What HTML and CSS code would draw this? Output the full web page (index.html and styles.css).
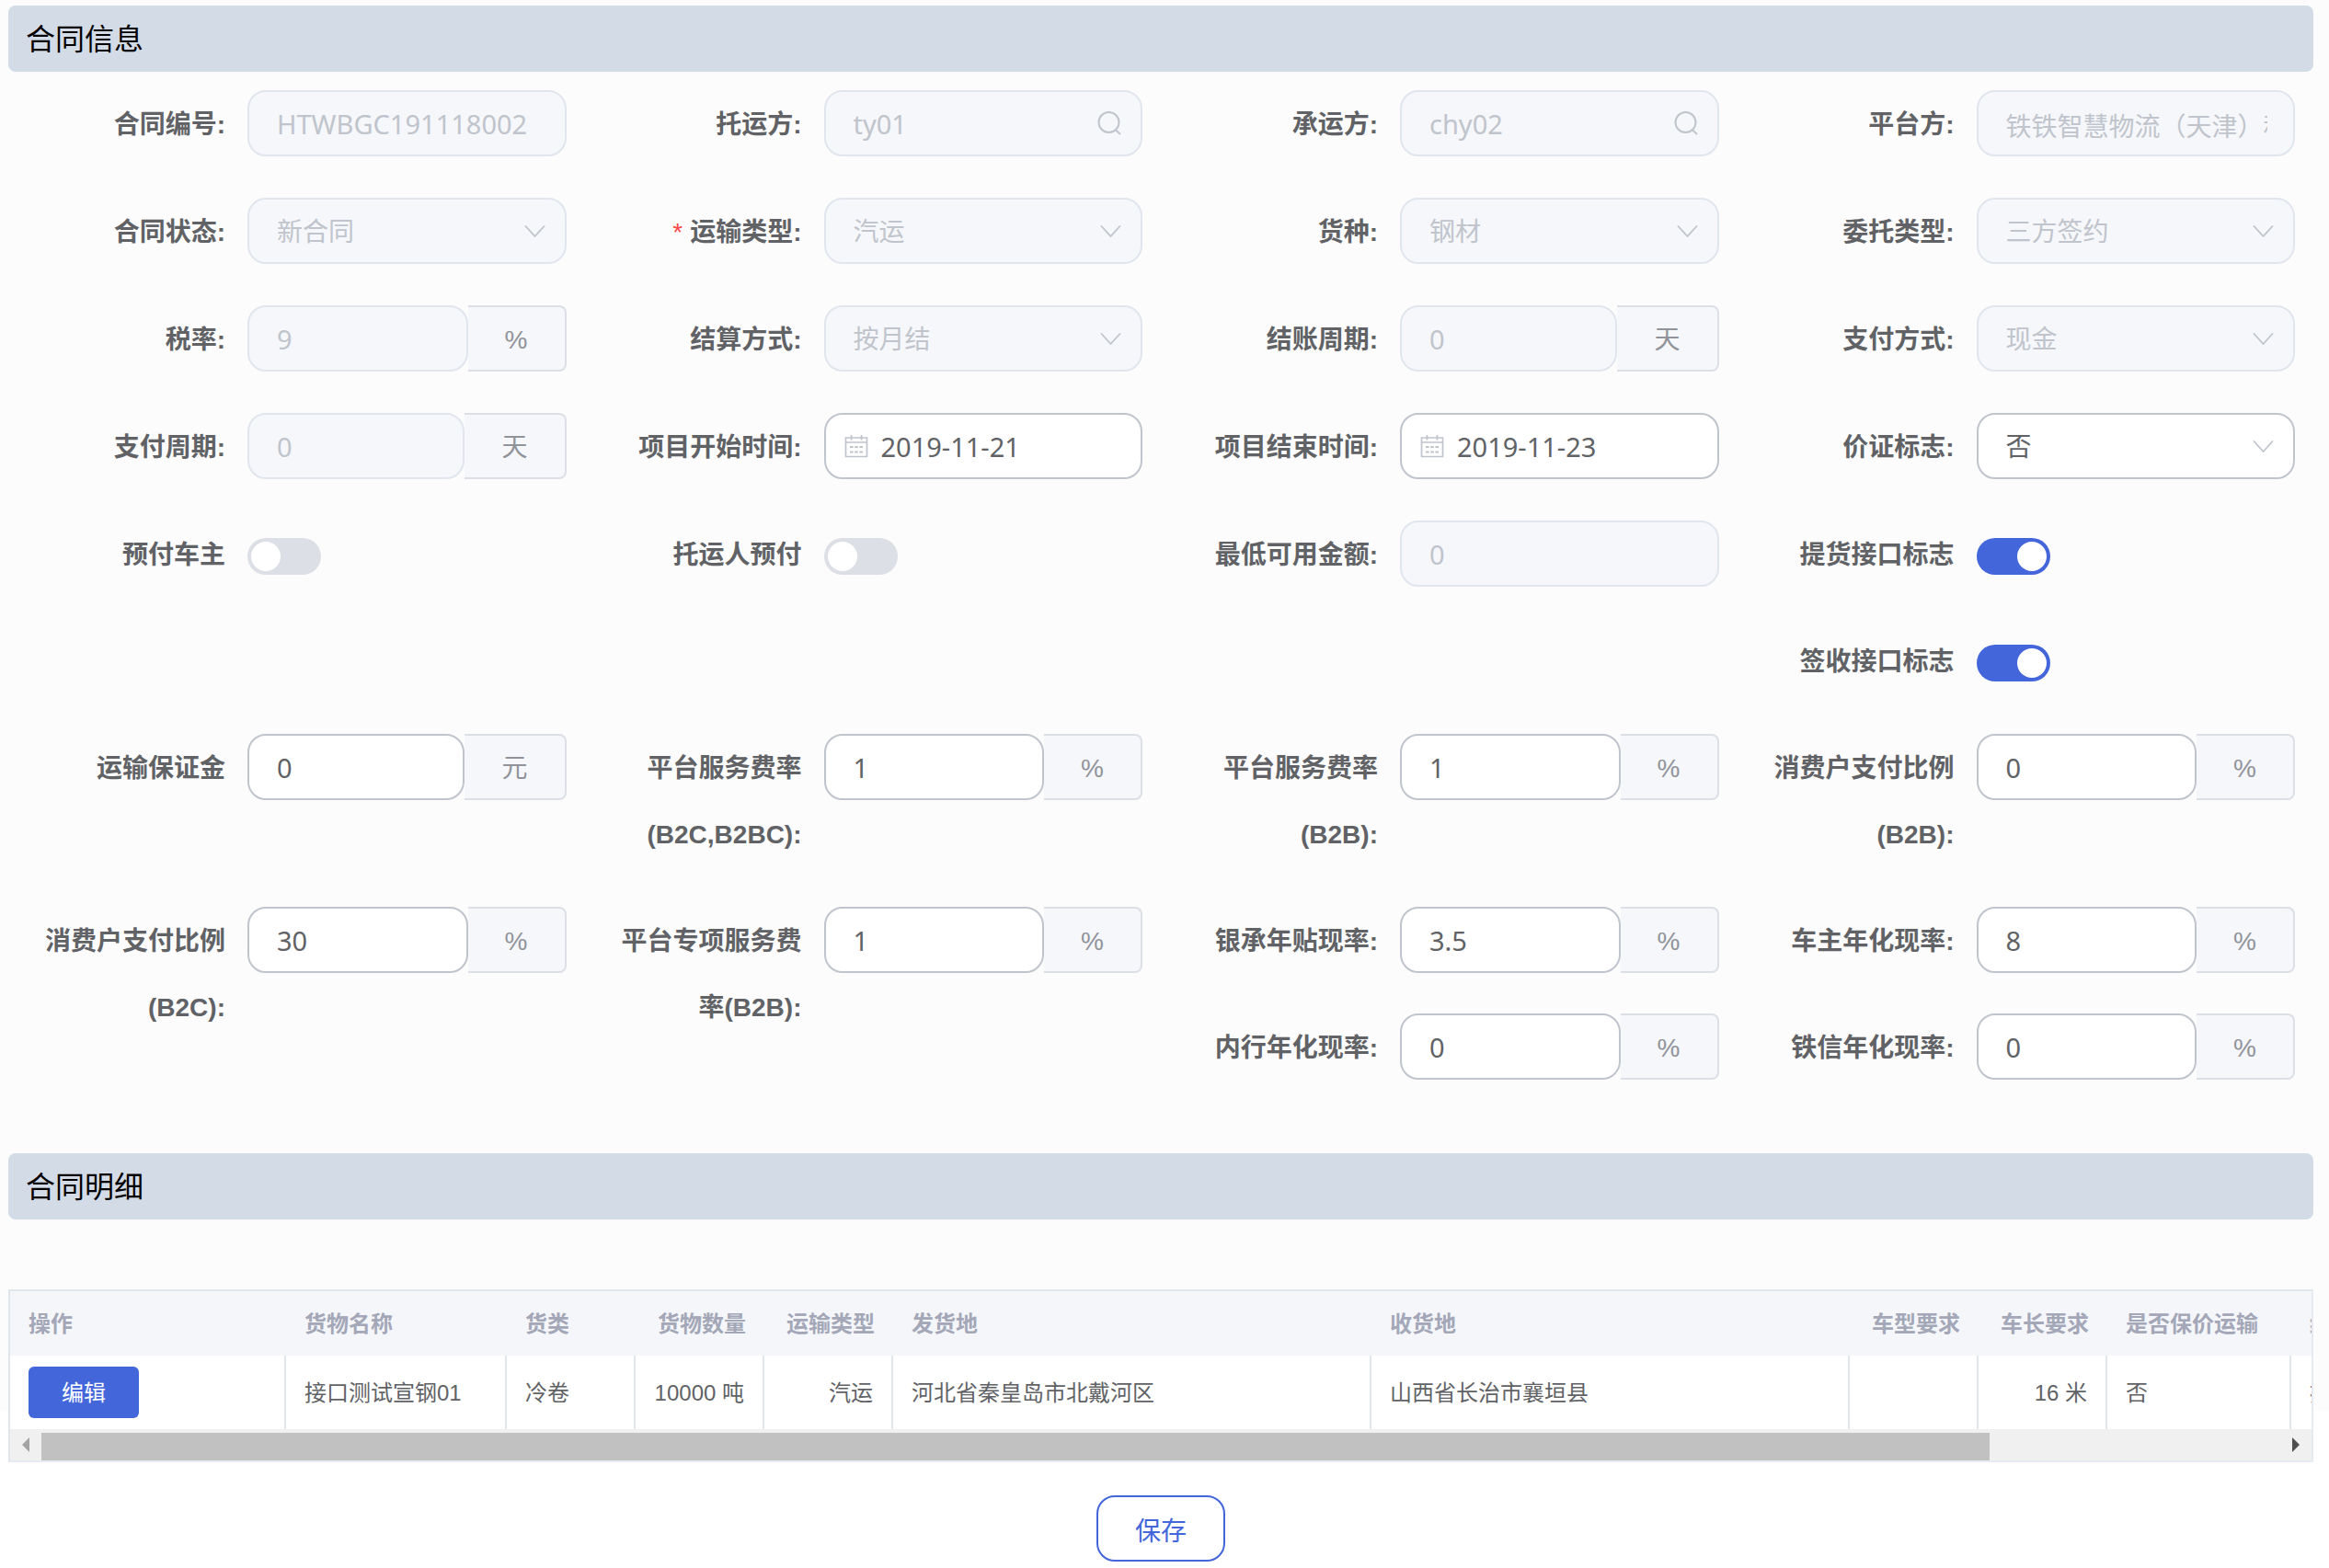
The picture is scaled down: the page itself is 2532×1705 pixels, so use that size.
FILE: index.html
```html
<!DOCTYPE html>
<html lang="zh-CN">
<head>
<meta charset="utf-8">
<meta name="viewport" content="width=device-width, initial-scale=1">
<title>合同信息</title>
<link rel="stylesheet" href="styles.css">
</head>
<body>
<svg class="sprite" aria-hidden="true">
  <symbol id="chevron" viewBox="0 0 24 24"><path d="M2.500 7L12.500 18L22.500 7" fill="none" stroke="currentColor" stroke-width="1.800" stroke-linecap="round" stroke-linejoin="round"/></symbol>
  <symbol id="search" viewBox="0 0 26 26"><circle cx="12.500" cy="12" r="11" fill="none" stroke="currentColor" stroke-width="2"/><path d="M20 20.500L24.500 24.500" fill="none" stroke="currentColor" stroke-width="2" stroke-linecap="round"/></symbol>
  <symbol id="calendar" viewBox="0 0 26 26"><path d="M1.500 4H24.500V24.500H1.500ZM1.500 9H24.500M7.500 1V6.500M18.500 1V6.500" fill="none" stroke="currentColor" stroke-width="1.700"/><path d="M6 14H20M6 19.500H20" fill="none" stroke="currentColor" stroke-width="2" stroke-dasharray="3.600 1.600"/></symbol>
</svg>
<main class="page">
  <form>
    <h2 class="section-title">合同信息</h2>

    <div class="fields fields-basic">
      <div class="field"><label for="no">合同编号:</label><div class="control"><input id="no" class="box latin" value="HTWBGC191118002" disabled></div></div>
      <div class="field"><label for="shipper">托运方:</label><div class="control"><input id="shipper" class="box latin" value="ty01" disabled><svg class="icon icon-search"><use href="#search"/></svg></div></div>
      <div class="field"><label for="carrier">承运方:</label><div class="control"><input id="carrier" class="box latin" value="chy02" disabled><svg class="icon icon-search"><use href="#search"/></svg></div></div>
      <div class="field"><label for="platform">平台方:</label><div class="control"><input id="platform" class="box" value="铁铁智慧物流（天津）科技有限公司" disabled></div></div>

      <div class="field"><label for="status">合同状态:</label><div class="control"><select id="status" class="box" disabled><option>新合同</option></select><svg class="icon"><use href="#chevron"/></svg></div></div>
      <div class="field"><label for="transport"><span class="required">*</span>运输类型:</label><div class="control"><select id="transport" class="box" disabled><option>汽运</option></select><svg class="icon"><use href="#chevron"/></svg></div></div>
      <div class="field"><label for="goods">货种:</label><div class="control"><select id="goods" class="box" disabled><option>钢材</option></select><svg class="icon"><use href="#chevron"/></svg></div></div>
      <div class="field"><label for="entrust">委托类型:</label><div class="control"><select id="entrust" class="box" disabled><option>三方签约</option></select><svg class="icon"><use href="#chevron"/></svg></div></div>

      <div class="field"><label for="tax">税率:</label><div class="control"><input id="tax" class="box latin" value="9" disabled><span class="unit">%</span></div></div>
      <div class="field"><label for="settle">结算方式:</label><div class="control"><select id="settle" class="box" disabled><option>按月结</option></select><svg class="icon"><use href="#chevron"/></svg></div></div>
      <div class="field"><label for="bill">结账周期:</label><div class="control"><input id="bill" class="box latin" value="0" disabled><span class="unit">天</span></div></div>
      <div class="field"><label for="pay">支付方式:</label><div class="control"><select id="pay" class="box" disabled><option>现金</option></select><svg class="icon"><use href="#chevron"/></svg></div></div>

      <div class="field"><label for="paycycle">支付周期:</label><div class="control"><input id="paycycle" class="box latin" value="0" disabled><span class="unit">天</span></div></div>
      <div class="field"><label for="start">项目开始时间:</label><div class="control"><input id="start" class="box latin date" value="2019-11-21"><svg class="icon icon-calendar"><use href="#calendar"/></svg></div></div>
      <div class="field"><label for="end">项目结束时间:</label><div class="control"><input id="end" class="box latin date" value="2019-11-23"><svg class="icon icon-calendar"><use href="#calendar"/></svg></div></div>
      <div class="field"><label for="flag">价证标志:</label><div class="control"><select id="flag" class="box"><option>否</option><option>是</option></select><svg class="icon"><use href="#chevron"/></svg></div></div>
    </div>

    <div class="fields fields-rates">
      <div class="field"><label for="s1">预付车主</label><div class="control"><input id="s1" class="switch" type="checkbox"></div></div>
      <div class="field"><label for="s2">托运人预付</label><div class="control"><input id="s2" class="switch" type="checkbox"></div></div>
      <div class="field"><label for="minimum">最低可用金额:</label><div class="control"><input id="minimum" class="box latin" value="0" disabled></div></div>
      <div class="field"><label for="s3">提货接口标志</label><div class="control"><input id="s3" class="switch" type="checkbox" checked></div></div>

      <div class="field last-column"><label for="s4">签收接口标志</label><div class="control"><input id="s4" class="switch" type="checkbox" checked></div></div>

      <div class="field"><label for="deposit">运输保证金</label><div class="control"><input id="deposit" class="box latin" value="0"><span class="unit">元</span></div></div>
      <div class="field"><label for="r1">平台服务费率<br>(B2C,B2BC):</label><div class="control"><input id="r1" class="box latin" value="1"><span class="unit">%</span></div></div>
      <div class="field"><label for="r2">平台服务费率<br>(B2B):</label><div class="control"><input id="r2" class="box latin" value="1"><span class="unit">%</span></div></div>
      <div class="field"><label for="r3">消费户支付比例<br>(B2B):</label><div class="control"><input id="r3" class="box latin" value="0"><span class="unit">%</span></div></div>

      <div class="field tall"><label for="r4">消费户支付比例<br>(B2C):</label><div class="control"><input id="r4" class="box latin" value="30"><span class="unit">%</span></div></div>
      <div class="field tall"><label for="r5">平台专项服务费<br>率(B2B):</label><div class="control"><input id="r5" class="box latin" value="1"><span class="unit">%</span></div></div>
      <div class="field"><label for="r6">银承年贴现率:</label><div class="control"><input id="r6" class="box latin" value="3.5"><span class="unit">%</span></div></div>
      <div class="field"><label for="r7">车主年化现率:</label><div class="control"><input id="r7" class="box latin" value="8"><span class="unit">%</span></div></div>
      <div class="field"><label for="r8">内行年化现率:</label><div class="control"><input id="r8" class="box latin" value="0"><span class="unit">%</span></div></div>
      <div class="field"><label for="r9">铁信年化现率:</label><div class="control"><input id="r9" class="box latin" value="0"><span class="unit">%</span></div></div>
    </div>

    <h2 class="section-title">合同明细</h2>

    <div class="table-box">
      <div class="table-view">
        <table class="details">
          <colgroup>
            <col class="w300"><col class="w240"><col class="w140"><col class="w140"><col class="w140"><col class="w520"><col class="w520"><col class="w140"><col class="w140"><col class="w200"><col>
          </colgroup>
          <thead>
            <tr><th>操作</th><th>货物名称</th><th>货类</th><th class="right">货物数量</th><th class="right">运输类型</th><th>发货地</th><th>收货地</th><th class="right">车型要求</th><th class="right">车长要求</th><th>是否保价运输</th><th>结算方式</th></tr>
          </thead>
          <tbody>
            <tr><td><button type="button" class="edit">编辑</button></td><td>接口测试宣钢01</td><td>冷卷</td><td class="right">10000 吨</td><td class="right">汽运</td><td>河北省秦皇岛市北戴河区</td><td>山西省长治市襄垣县</td><td class="right"></td><td class="right">16 米</td><td>否</td><td>按月结</td></tr>
          </tbody>
        </table>
      </div>
      <div class="scrollbar">
        <span class="arrow arrow-left"></span>
        <div class="track"><div class="thumb"></div></div>
        <span class="arrow arrow-right"></span>
      </div>
    </div>

    <div class="actions"><button type="submit" class="save">保存</button></div>
  </form>
</main>
</body>
</html>
```
FILE: styles.css
```css
* { box-sizing: border-box; }

html { background: #fff; }

body {
  margin: 0;
  font-family: "Liberation Sans", "Noto Sans CJK SC", sans-serif;
  font-size: 28px;
  color: #606266;
  background: linear-gradient(#fcfcfc 90vh, #fff 0) no-repeat;
}

input, select, button { font: inherit; color: inherit; margin: 0; }

.sprite { display: none; }

.page { padding: 6px 17px 7px 9px; }

.section-title {
  margin: 0;
  padding: 2px 19px 0;
  border-radius: 8px;
  background: #d3dbe6;
  color: #000;
  font-size: 32px;
  font-weight: 400;
  line-height: 70px;
}

/* Form grid */
.fields {
  display: grid;
  grid-template-columns: repeat(4, minmax(0, 1fr));
}
.fields-basic { padding-top: 20px; row-gap: 45px; }
.fields-rates { padding: 45px 0 80px; row-gap: 44px; }

.field {
  display: flex;
  align-items: flex-start;
  padding-right: 20px;
}
.last-column { grid-column: 4; }
.tall { grid-row: span 2; }

.field label {
  flex: 0 0 260px;
  margin-bottom: -2px;
  padding: 2px 24px 0 0;
  text-align: right;
  font-weight: 700;
  line-height: 72px;
}
.required {
  margin-right: 8px;
  color: #ff4949;
  font-weight: 400;
}

.control {
  position: relative;
  display: flex;
  flex: 1;
  min-width: 0;
  min-height: 72px;
}

.box {
  flex: 1;
  min-width: 0;
  width: 100%;
  height: 72px;
  padding: 3px 28px 0 30px;
  border: 2px solid #c0c4cc;
  border-radius: 20px;
  background: #fff;
  appearance: none;
  outline: none;
}
.box:disabled {
  border-color: #e1e5ee;
  background: #f5f7fb;
  color: #c0c4cc;
  opacity: 1;
}
.latin {
  padding-top: 0;
  font-family: "Noto Sans", "Noto Sans CJK SC", sans-serif;
  font-size: 29px;
}
.date { padding-left: 60px; }

.icon {
  position: absolute;
  top: 24px;
  right: 23px;
  width: 24px;
  height: 24px;
  color: #c0c4cc;
  pointer-events: none;
}
.icon-search { top: 23px; width: 26px; height: 26px; }
.icon-calendar { top: 23px; right: auto; left: 22px; width: 26px; height: 26px; }

.unit {
  padding: 3px 40px 0;
  border: 2px solid #dcdfe6;
  border-left: 0;
  border-radius: 0 8px 8px 0;
  background: #f5f7fb;
  color: #909399;
  line-height: 65px;
}

.switch {
  width: 80px;
  height: 40px;
  margin-top: 19px;
  padding: 4px;
  border-radius: 20px;
  background: #dcdfe6;
  appearance: none;
}
.switch::before {
  content: "";
  display: block;
  width: 32px;
  height: 32px;
  border-radius: 50%;
  background: #fff;
}
.switch:checked { background: #4466db; }
.switch:checked::before { margin-left: auto; }

/* Detail table */
.table-box {
  margin-top: 76px;
  border: 2px solid #dfe6ec;
  border-right-color: #e6eaf3;
  border-bottom-color: #e6eaf3;
  background: #fff;
}
.table-view { overflow: hidden; }

.details {
  width: 2876px;
  table-layout: fixed;
  border-collapse: separate;
  border-spacing: 0;
  font-size: 24px;
  line-height: 32px;
  white-space: nowrap;
}
.w140 { width: 140px; }
.w200 { width: 200px; }
.w240 { width: 240px; }
.w300 { width: 300px; }
.w520 { width: 520px; }

.details th, .details td { padding: 2px 20px 0; text-align: left; }
.details th {
  height: 70px;
  background: #f4f6fa;
  color: #a3a7b7;
}
.details td {
  height: 80px;
  border-right: 2px solid #dfe6ec;
}
.details .right { text-align: right; }

.edit {
  display: block;
  width: 120px;
  height: 56px;
  margin-bottom: 2px;
  padding: 2px 0 0;
  border: 0;
  border-radius: 6px;
  background: #4466db;
  color: #fff;
}

.scrollbar {
  display: flex;
  align-items: center;
  height: 34px;
  background: #f0f0f0;
}
.arrow {
  flex: 0 0 34px;
  display: flex;
  justify-content: center;
}
.arrow::before {
  content: "";
  border: 8px solid transparent;
}
.arrow-left::before { border-left: 0; border-right-color: #a3a3a3; }
.arrow-right::before { border-right: 0; border-left-color: #505050; }
.track { flex: 1; align-self: flex-end; }
.thumb { width: 87%; height: 30px; background: #c1c1c1; }

.actions { padding-top: 36px; text-align: center; }
.save {
  display: block;
  width: 140px;
  height: 72px;
  margin: 0 auto;
  padding: 2px 0 0;
  border: 2px solid #4466db;
  border-radius: 20px;
  background: #fff;
  color: #4466db;
}
```
